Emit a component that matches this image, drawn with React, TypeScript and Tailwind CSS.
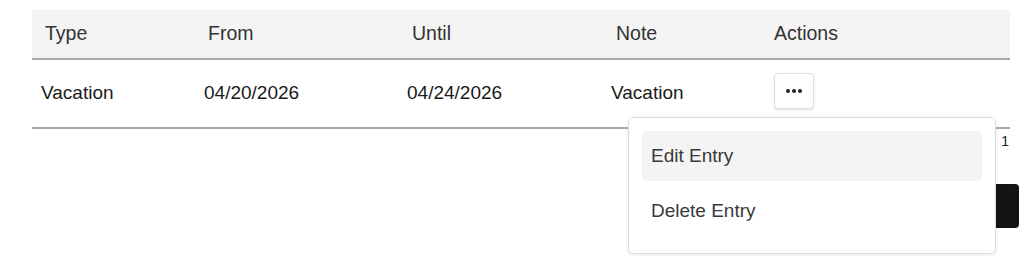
import React from 'react';

const rows = [
  { type: 'Vacation', from: '04/20/2026', until: '04/24/2026', note: 'Vacation' },
];

export default function App() {
  return (
    <div
      className="relative h-[256px] w-[1024px] overflow-hidden bg-white text-[19px]"
      style={{ fontFamily: '"Liberation Sans", Arial, sans-serif' }}
    >
      <div className="w-[1019px] pl-8 pt-[10px]">
        <table className="w-[978px] table-fixed border-collapse">
          <colgroup>
            <col className="w-[163px]" />
            <col className="w-[204px]" />
            <col className="w-[204px]" />
            <col className="w-[158px]" />
            <col />
          </colgroup>
          <thead>
            <tr className="h-[49px] border-b-2 border-[#a9a9a9] bg-[#f4f4f4] text-left text-[19.5px] text-[#333]">
              <th className="pl-[13px] font-normal">Type</th>
              <th className="pl-[13px] font-normal">From</th>
              <th className="pl-[13px] font-normal">Until</th>
              <th className="pl-[13px] font-normal">Note</th>
              <th className="pl-[13px] font-normal">Actions</th>
            </tr>
          </thead>
          <tbody>
            {rows.map((r, i) => (
              <tr key={i} className="h-[69px] border-b-2 border-[#a9a9a9] text-[#1a1a1a]">
                <td className="pl-[9px]">{r.type}</td>
                <td className="pl-[9px]">{r.from}</td>
                <td className="pl-[8px]">{r.until}</td>
                <td className="pl-[8px]">{r.note}</td>
                <td className="pl-[13px]">
                  <button className="-mt-[6px] flex h-[36px] w-[40px] items-center justify-center rounded-[4px] border border-[#dedede] bg-white shadow-sm">
                    <span className="flex gap-[2px]">
                      <span className="h-[4px] w-[4px] rounded-full bg-[#222]" />
                      <span className="h-[4px] w-[4px] rounded-full bg-[#222]" />
                      <span className="h-[4px] w-[4px] rounded-full bg-[#222]" />
                    </span>
                  </button>
                </td>
              </tr>
            ))}
          </tbody>
        </table>

        <div className="flex flex-col items-end">
          <span className="mt-[5px] pr-[10px] text-[14px] leading-none text-[#222]">1</span>
          <button className="mt-[36px] h-[44px] w-[90px] rounded-[4px] bg-[#141414]" />
        </div>
      </div>

      {/* dropdown menu */}
      <div className="absolute left-[628px] top-[117px] w-[368px] rounded-[5px] border border-[#dcdcdc] bg-white px-[13px] pb-[17px] pt-[13px] text-[#3a3a3a] shadow-[0_2px_6px_rgba(0,0,0,0.08)]">
        <div className="flex h-[50px] items-center rounded-[5px] bg-[#f4f4f5] px-[9px]">Edit Entry</div>
        <div className="mt-[5px] flex h-[50px] items-center px-[9px]">Delete Entry</div>
      </div>
    </div>
  );
}
